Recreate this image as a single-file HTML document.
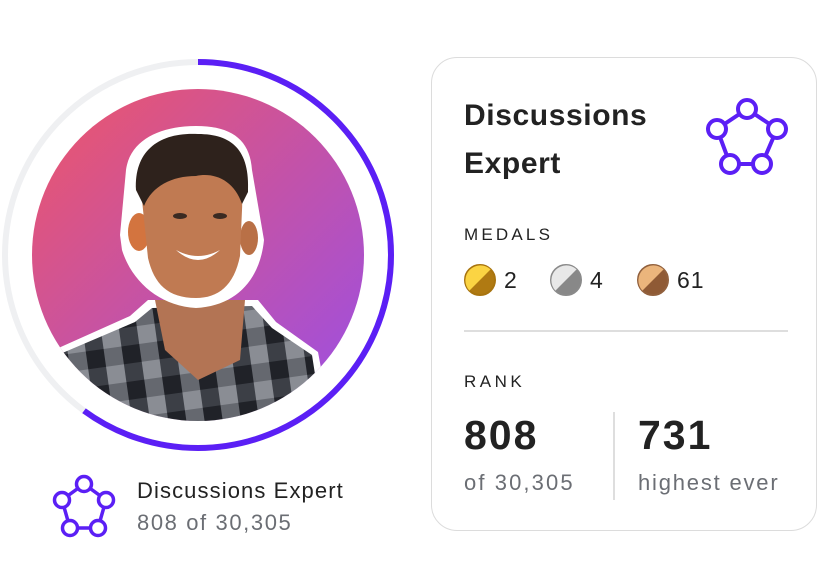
<!DOCTYPE html>
<html><head><meta charset="utf-8"><style>
html,body{margin:0;padding:0;background:#fff;width:822px;height:582px;overflow:hidden;font-family:"Liberation Sans",sans-serif;}
.abs{position:absolute;white-space:nowrap;}
.card{position:absolute;left:431px;top:57px;width:386px;height:474px;border:1.5px solid #dcdcdc;border-radius:26px;box-sizing:border-box;}
</style></head><body>
<svg class="abs" style="left:0;top:0" width="420" height="560" viewBox="0 0 420 560">
<defs>
<linearGradient id="g" x1="0" y1="0" x2="1" y2="1">
<stop offset="0" stop-color="#ee5668"/><stop offset="1" stop-color="#9a4fe6"/>
</linearGradient>
<clipPath id="c"><circle cx="198" cy="255" r="166"/></clipPath>
<pattern id="pl" width="36" height="36" patternUnits="userSpaceOnUse" patternTransform="rotate(-8)">
<rect width="36" height="36" fill="#8a8d94"/>
<rect width="18" height="36" fill="#3c3f46"/>
<rect width="36" height="18" fill="#55585f" opacity=".7"/>
<rect width="18" height="18" fill="#202228"/>
</pattern>
</defs>
<circle cx="198" cy="255" r="193" fill="none" stroke="#eff0f2" stroke-width="6"/>
<circle cx="198" cy="255" r="193" fill="none" stroke="#5b1ff5" stroke-width="6" stroke-dasharray="728 1300" transform="rotate(-90 198 255)"/>
<circle cx="198" cy="255" r="166" fill="url(#g)"/>
<g clip-path="url(#c)">
<path d="M54 350 L130 316 L148 300 L258 300 L276 322 L318 352 L340 470 L40 470 Z" fill="#fff"/>
<path d="M60 354 L135 322 L152 308 L252 306 L272 328 L312 355 L330 470 L50 470 Z" fill="url(#pl)"/>
<path d="M155 300 L245 300 L240 360 L198 380 L165 350 Z" fill="#b37454"/>
<path d="M120 235 L126 170 C130 140 160 126 196 126 C232 126 250 140 252 170 L264 240 C260 280 236 306 196 308 C160 306 132 282 122 250 Z" fill="#fff"/>
<ellipse cx="139" cy="232" rx="11" ry="19" fill="#d3743f"/>
<ellipse cx="249" cy="238" rx="9" ry="17" fill="#b97046"/>
<path d="M142 200 C140 172 160 162 196 162 C230 162 244 176 242 210 L240 256 C234 286 218 298 196 298 C168 298 154 284 148 258 Z" fill="#c07a52"/>
<path d="M136 190 C134 150 160 132 198 134 C232 134 250 150 248 192 L242 204 C234 180 214 172 196 176 C172 176 152 186 144 206 Z" fill="#2e221c"/>
<path d="M176 250 Q198 262 220 250 Q198 270 176 250Z" fill="#fff"/>
<ellipse cx="180" cy="216" rx="7" ry="3" fill="#3a2a22"/>
<ellipse cx="220" cy="216" rx="7" ry="3" fill="#3a2a22"/>
</g>
<g fill="#fff" stroke="#5b1ff5" stroke-width="3.5">
<path d="M84 484 L62 500 L70 528 L98 528 L106 500 Z" fill="none"/>
<circle cx="84" cy="484" r="7.5"/><circle cx="62" cy="500" r="7.5"/><circle cx="106" cy="500" r="7.5"/><circle cx="70" cy="528" r="7.5"/><circle cx="98" cy="528" r="7.5"/>
</g>
</svg>
<div class="abs" style="left:137px;top:478px;font-size:22px;letter-spacing:1.1px;color:#222;">Discussions Expert</div>
<div class="abs" style="left:137px;top:510px;font-size:22px;letter-spacing:1.6px;color:#6b6e74;">808 of 30,305</div>

<div class="card"></div>
<div class="abs" style="left:464px;top:92px;font-size:30px;letter-spacing:0.6px;line-height:48px;color:#222;font-weight:bold;">Discussions<br>Expert</div>
<svg class="abs" style="left:700px;top:95px" width="100" height="85" viewBox="700 95 100 85">
<g fill="#fff" stroke="#5b1ff5" stroke-width="4">
<path d="M747 109 L717 129 L730 164 L762 164 L777 129 Z" fill="none"/>
<circle cx="747" cy="109" r="9"/><circle cx="717" cy="129" r="9"/><circle cx="777" cy="129" r="9"/><circle cx="730" cy="164" r="9"/><circle cx="762" cy="164" r="9"/>
</g></svg>
<div class="abs" style="left:464px;top:225px;font-size:17px;letter-spacing:3.2px;color:#222;">MEDALS</div>
<svg class="abs" style="left:460px;top:262px" width="260" height="38" viewBox="460 262 260 38">
<g stroke-width="2">
<circle cx="480" cy="280" r="15" fill="#b07a12" stroke="#a8740f"/>
<path d="M469.4 290.6 A15 15 0 0 1 490.6 269.4 Z" fill="#fbd443"/>
<circle cx="566" cy="280" r="15" fill="#888" stroke="#8a8a8a"/>
<path d="M555.4 290.6 A15 15 0 0 1 576.6 269.4 Z" fill="#e8e8e8"/>
<circle cx="653" cy="280" r="15" fill="#8f5a35" stroke="#91603d"/>
<path d="M642.4 290.6 A15 15 0 0 1 663.6 269.4 Z" fill="#ebb57c"/>
</g></svg>
<div class="abs" style="left:504px;top:267px;font-size:23px;color:#222;">2</div>
<div class="abs" style="left:590px;top:267px;font-size:23px;color:#222;">4</div>
<div class="abs" style="left:677px;top:267px;font-size:23px;letter-spacing:1px;color:#222;">61</div>
<div class="abs" style="left:464px;top:330px;width:324px;height:1.5px;background:#dedede;"></div>
<div class="abs" style="left:464px;top:372px;font-size:17px;letter-spacing:3.5px;color:#222;">RANK</div>
<div class="abs" style="left:464px;top:412px;font-size:41px;letter-spacing:2px;font-weight:bold;color:#222;">808</div>
<div class="abs" style="left:638px;top:412px;font-size:41px;letter-spacing:2px;font-weight:bold;color:#222;">731</div>
<div class="abs" style="left:464px;top:470px;font-size:22px;letter-spacing:2.1px;color:#6b6e74;">of 30,305</div>
<div class="abs" style="left:638px;top:470px;font-size:22px;letter-spacing:1.8px;color:#6b6e74;">highest ever</div>
<div class="abs" style="left:613px;top:412px;width:1.5px;height:88px;background:#dedede;"></div>
</body></html>
